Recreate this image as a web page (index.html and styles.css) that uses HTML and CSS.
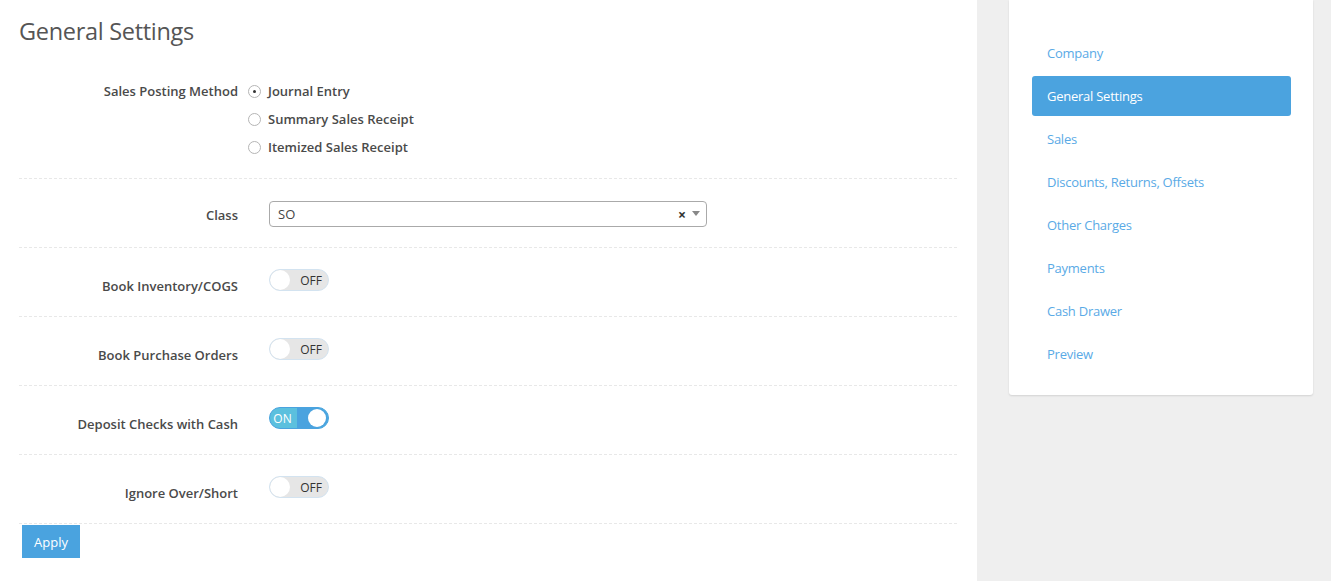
FILE: index.html
```html
<!DOCTYPE html>
<html>
<head>
  <title>General Settings</title>
  <link rel="stylesheet" href="styles.css">
</head>
<body>
  <div class="layout">
    <!-- Main form -->
    <div class="main">
      <h1 class="page-title">General Settings</h1>

      <div class="form-row radios-row">
        <div class="form-label">Sales Posting Method</div>
        <div class="form-control">
          <label class="radio"><span class="radio-dot checked"></span>Journal Entry</label>
          <label class="radio"><span class="radio-dot"></span>Summary Sales Receipt</label>
          <label class="radio"><span class="radio-dot"></span>Itemized Sales Receipt</label>
        </div>
      </div>

      <div class="form-row">
        <div class="form-label select-label">Class</div>
        <div class="form-control indent">
          <div class="select">
            <span class="select-value">SO</span>
            <span class="select-clear">&times;</span>
            <span class="select-arrow"></span>
          </div>
        </div>
      </div>

      <div class="form-row">
        <div class="form-label toggle-label">Book Inventory/COGS</div>
        <div class="form-control indent">
          <div class="toggle"><span class="knob"></span><span class="toggle-text">OFF</span></div>
        </div>
      </div>

      <div class="form-row">
        <div class="form-label toggle-label">Book Purchase Orders</div>
        <div class="form-control indent">
          <div class="toggle"><span class="knob"></span><span class="toggle-text">OFF</span></div>
        </div>
      </div>

      <div class="form-row">
        <div class="form-label toggle-label">Deposit Checks with Cash</div>
        <div class="form-control indent">
          <div class="toggle on"><span class="toggle-text">ON</span><span class="toggle-handle"><span class="knob"></span></span></div>
        </div>
      </div>

      <div class="form-row">
        <div class="form-label toggle-label">Ignore Over/Short</div>
        <div class="form-control indent">
          <div class="toggle"><span class="knob"></span><span class="toggle-text">OFF</span></div>
        </div>
      </div>

      <button class="apply-button">Apply</button>
    </div>

    <!-- Sidebar -->
    <div class="sidebar">
      <div class="side-card">
        <a class="side-link">Company</a>
        <a class="side-link active">General Settings</a>
        <a class="side-link">Sales</a>
        <a class="side-link">Discounts, Returns, Offsets</a>
        <a class="side-link">Other Charges</a>
        <a class="side-link">Payments</a>
        <a class="side-link">Cash Drawer</a>
        <a class="side-link">Preview</a>
      </div>
    </div>
  </div>
</body>
</html>
```

FILE: styles.css
```css
body {
  margin: 0;
  padding: 0;
  background: #fff;
  color: #4a4a4a;
  font-family: 'Open Sans', sans-serif;
  font-size: 13px;
}

.layout {
  display: flex;
  height: 581px;
}

/* Main */
.main {
  width: 938px;
  padding: 0 20px 0 19px;
  background: #fff;
}

.page-title {
  margin: 0;
  height: 60px;
  padding-top: 16px;
  box-sizing: border-box;
  font-size: 23.5px;
  font-weight: 400;
  color: #555;
  line-height: 30px;
  letter-spacing: -0.3px;
}

.form-row {
  display: flex;
  align-items: center;
  height: 68px;
  border-bottom: 1px dashed #e8e8e8;
}

.radios-row {
  height: auto;
  align-items: flex-start;
  padding: 17px 0;
}

.form-label {
  width: 219px;
  text-align: right;
  font-weight: 600;
  color: #4a4a4a;
  line-height: 28px;
}

.select-label {
  margin-top: 4px;
}

.toggle-label {
  margin-top: 7px;
}

.form-control {
  padding-left: 10px;
}

.form-control.indent {
  padding-left: 31px;
}

.radio {
  display: flex;
  align-items: center;
  height: 28px;
  font-weight: 600;
  color: #4a4a4a;
}

.radio-dot {
  width: 11px;
  height: 11px;
  border: 1px solid #b5b5b5;
  border-radius: 50%;
  margin-right: 7px;
  position: relative;
  background: #fff;
}

.radio-dot.checked::after {
  content: '';
  position: absolute;
  left: 4px;
  top: 4px;
  width: 3px;
  height: 3px;
  border-radius: 50%;
  background: #333;
}

/* Select */
.select {
  box-sizing: border-box;
  width: 438px;
  height: 26px;
  border: 1px solid #aaa;
  border-radius: 4px;
  display: flex;
  align-items: center;
  padding: 0 0 0 8px;
  margin-top: 2px;
}

.select-value {
  flex: 1;
  color: #444;
}

.select-clear {
  font-weight: 700;
  font-size: 14px;
  color: #333;
  margin-right: 6px;
}

.select-arrow {
  width: 0;
  height: 0;
  border-left: 4px solid transparent;
  border-right: 4px solid transparent;
  border-top: 5px solid #888;
  margin-right: 6px;
  margin-top: -2px;
}

/* Toggle */
.toggle {
  width: 58px;
  height: 20px;
  border: 1px solid #d3e3f0;
  border-radius: 11px;
  background: #e6e6e6;
  display: flex;
  align-items: center;
  overflow: hidden;
  margin-bottom: 4px;
}

.toggle .knob {
  width: 20px;
  height: 20px;
  border-radius: 50%;
  background: #fff;
  flex-shrink: 0;
}

.toggle-text {
  flex: 1;
  text-align: center;
  font-size: 12px;
  color: #333;
  padding-left: 4px;
}

.toggle.on {
  border-color: #4aa3df;
  background: #5bc0de;
}

.toggle.on .toggle-text {
  color: #fff;
  padding-left: 0;
  padding-right: 2px;
}

.toggle-handle {
  width: 31px;
  height: 20px;
  background: #4aa3df;
  display: flex;
  justify-content: flex-end;
  align-items: center;
}

.toggle-handle .knob {
  width: 18px;
  height: 18px;
  margin-right: 2px;
}

.apply-button {
  margin: 1px 0 0 3px;
  width: 58px;
  height: 33px;
  border: none;
  background: #4aa3df;
  color: #fff;
  font-family: 'Open Sans', sans-serif;
  font-size: 13px;
}

/* Sidebar */
.sidebar {
  flex: 1;
  background: #efefef;
  padding: 0 18px 0 32px;
}

.side-card {
  background: #fff;
  border-radius: 0 0 3px 3px;
  box-shadow: 0 1px 2px rgba(0, 0, 0, 0.12);
  padding: 33px 22px 21px 23px;
  display: flex;
  flex-direction: column;
  gap: 3px;
}

.side-link {
  height: 40px;
  line-height: 40px;
  padding-left: 15px;
  color: #5aaae6;
  border-radius: 3px;
  letter-spacing: -0.25px;
}

.side-link.active {
  background: #4ba3df;
  color: #fff;
}
```
